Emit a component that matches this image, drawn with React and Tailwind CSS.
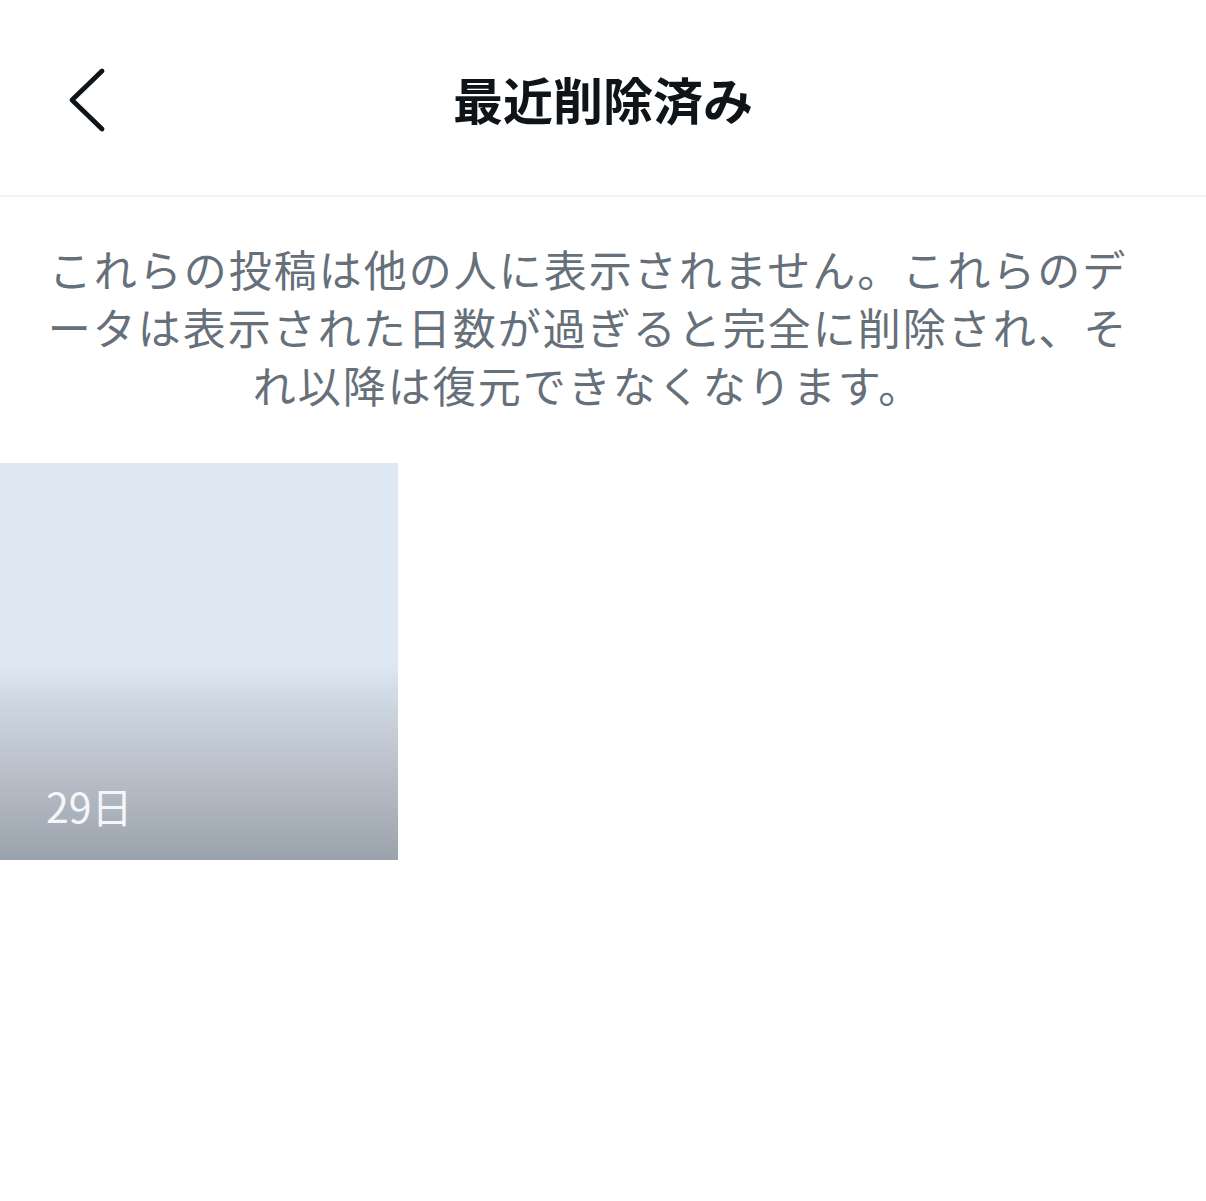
import React from "react";

export default function App() {
  return (
    <div
      className="w-[1206px] h-[1201px] bg-white overflow-hidden"
      style={{ fontFamily: '"Noto Sans CJK JP", "Noto Sans", sans-serif' }}
    >
      <header className="relative h-[197px] border-b-2 border-[#eff1f3] flex items-center justify-center">
        <button className="absolute left-[64px] top-[66px] w-[46px] h-[68px] flex items-center justify-center">
          <svg width="46" height="68" viewBox="0 0 46 68" fill="none">
            <path d="M38 5 L8 34 L38 63" stroke="#0f1419" strokeWidth="4.8" strokeLinecap="round" strokeLinejoin="round" />
          </svg>
        </button>
        <h1 className="text-[50px] font-bold text-[#0f1419] leading-none mt-[0px]">最近削除済み</h1>
      </header>
      <div className="pl-[10px] pr-[40px] pt-[42px] pb-[50px] text-center text-[43px] leading-[58px] text-[#66707a] tracking-[2px]">
        <span className="block whitespace-nowrap">これらの投稿は他の人に表示されません。これらのデ</span>
        <span className="block whitespace-nowrap">ータは表示された日数が過ぎると完全に削除され、そ</span>
        <span className="block whitespace-nowrap">れ以降は復元できなくなります。</span>
      </div>
      <div className="grid grid-cols-3 gap-[6px]">
        <div className="relative h-[397px] w-[398px] bg-[linear-gradient(to_bottom,#dfe9f3_0%,#dfe9f3_50%,#ccd4df_62%,#b6bdc7_80%,#9aa2ab_100%)]">
          <span className="absolute left-[46px] top-[322px] text-[41px] leading-none text-[#f4f6f8]">29日</span>
        </div>
      </div>
    </div>
  );
}
